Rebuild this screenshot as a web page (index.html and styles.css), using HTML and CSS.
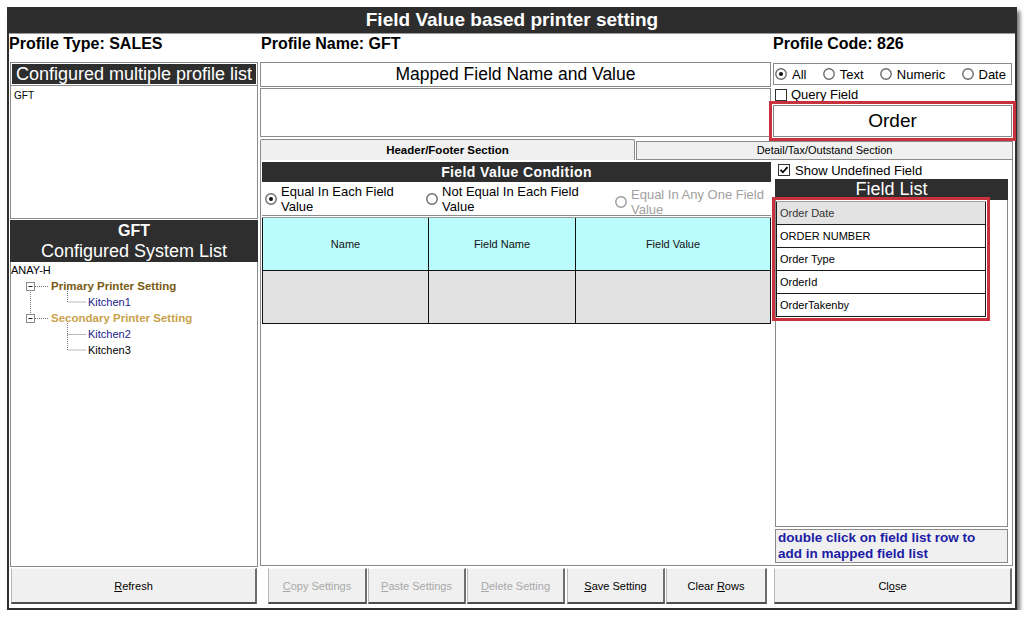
FILE: index.html
```html
<!DOCTYPE html>
<html>
<head>
<meta charset="utf-8">
<title>Field Value based printer setting</title>
<link rel="stylesheet" href="styles.css">
</head>
<body>
<div class="window">
  <div class="titlebar">Field Value based printer setting</div>
  <div class="body">
    <div class="profile-row">
      <div class="pc1">Profile Type: SALES</div>
      <div class="pc2">Profile Name: GFT</div>
      <div class="pc3">Profile Code: 826</div>
    </div>
    <div class="main">
      <div class="leftcol">
        <div class="lhead"><div class="lhead-in">Configured multiple profile list</div></div>
        <div class="plist">GFT</div>
        <div class="syshead">
          <div class="g1">GFT</div>
          <div class="g2">Configured System List</div>
        </div>
        <div class="tree">
          <svg class="tree-lines" width="90" height="100" viewBox="0 0 90 100">
            <g fill="none" stroke="#7a7a7a" stroke-dasharray="1 1">
              <path d="M19.5 28 V52"/>
              <path d="M24 24.5 H38"/>
              <path d="M24 56.5 H38"/>
              <path d="M56.5 29 V40 H75"/>
              <path d="M56.5 61 V88 H75"/>
              <path d="M56.5 72.5 H75"/>
            </g>
            <rect x="15.5" y="20.5" width="8" height="8" fill="#fff" stroke="#8a8a8a"/>
            <path d="M17.5 24.5 H21.5" stroke="#222"/>
            <rect x="15.5" y="52.5" width="8" height="8" fill="#fff" stroke="#8a8a8a"/>
            <path d="M17.5 56.5 H21.5" stroke="#222"/>
          </svg>
          <div class="trow t0">ANAY-H</div>
          <div class="trow t1 primary">Primary Printer Setting</div>
          <div class="trow t2 kit">Kitchen1</div>
          <div class="trow t1 secondary">Secondary Printer Setting</div>
          <div class="trow t2 kit">Kitchen2</div>
          <div class="trow t2">Kitchen3</div>
        </div>
      </div>
      <div class="rarea">
        <div class="top">
          <div class="midtop">
            <div class="maphead">Mapped Field Name and Value</div>
            <div class="mapbox"></div>
          </div>
          <div class="righttop">
            <div class="typebox">
              <span class="opt-s"><svg width="12" height="12" viewBox="0 0 12 12"><circle cx="6" cy="6" r="5.2" fill="#fff" stroke="#6b6b6b" stroke-width="1.4"/><circle cx="6" cy="6" r="2" fill="#111"/></svg>All</span>
              <span class="opt-s"><svg width="12" height="12" viewBox="0 0 12 12"><circle cx="6" cy="6" r="5.2" fill="#fff" stroke="#6b6b6b" stroke-width="1.4"/></svg>Text</span>
              <span class="opt-s"><svg width="12" height="12" viewBox="0 0 12 12"><circle cx="6" cy="6" r="5.2" fill="#fff" stroke="#6b6b6b" stroke-width="1.4"/></svg>Numeric</span>
              <span class="opt-s"><svg width="12" height="12" viewBox="0 0 12 12"><circle cx="6" cy="6" r="5.2" fill="#fff" stroke="#6b6b6b" stroke-width="1.4"/></svg>Date</span>
            </div>
            <div class="query"><svg class="cb" width="12" height="12" viewBox="0 0 12 12"><rect x="0.5" y="0.5" width="11" height="11" fill="#fff" stroke="#333"/></svg><span>Query Field</span></div>
            <div class="order">Order</div>
          </div>
        </div>
        <div class="tabs">
          <div class="tab1">Header/Footer Section</div>
          <div class="tab2">Detail/Tax/Outstand Section</div>
        </div>
        <div class="page">
          <div class="pleft">
            <div class="fvc">Field Value Condition</div>
            <div class="radios">
              <div class="opt o1"><svg width="12" height="12" viewBox="0 0 12 12"><circle cx="6" cy="6" r="5.2" fill="#fff" stroke="#6b6b6b" stroke-width="1.4"/><circle cx="6" cy="6" r="2" fill="#111"/></svg><span class="otext">Equal In Each Field Value</span></div>
              <div class="opt o2"><svg width="12" height="12" viewBox="0 0 12 12"><circle cx="6" cy="6" r="5.2" fill="#fff" stroke="#6b6b6b" stroke-width="1.4"/></svg><span class="otext">Not Equal In Each Field Value</span></div>
              <div class="opt o3"><svg width="12" height="12" viewBox="0 0 12 12"><circle cx="6" cy="6" r="5.2" fill="#fff" stroke="#9a9a9a" stroke-width="1.4"/></svg><span class="otext">Equal In Any One Field Value</span></div>
            </div>
            <div class="tbl">
              <div class="th first">Name</div>
              <div class="th">Field Name</div>
              <div class="th">Field Value</div>
              <div class="td first"></div>
              <div class="td"></div>
              <div class="td"></div>
            </div>
          </div>
          <div class="pright">
            <div class="showund"><svg class="cb" width="12" height="12" viewBox="0 0 12 12"><rect x="0.5" y="0.5" width="11" height="11" fill="#fff" stroke="#333"/><path d="M2.5 5.8 L4.9 8.3 L9.5 3.2" fill="none" stroke="#000" stroke-width="1.8"/></svg><span>Show Undefined Field</span></div>
            <div class="flhead">Field List</div>
            <div class="flist">
              <div class="rows">
                <div class="row sel">Order Date</div>
                <div class="row">ORDER NUMBER</div>
                <div class="row">Order Type</div>
                <div class="row">OrderId</div>
                <div class="row">OrderTakenby</div>
              </div>
            </div>
            <div class="hint">double click on field list row to add in mapped field list</div>
          </div>
        </div>
      </div>
    </div>
    <div class="btns">
      <div class="btn b-refresh"><span><u>R</u>efresh</span></div>
      <div class="btn b-copy dis"><span><u>C</u>opy Settings</span></div>
      <div class="btn b-paste dis"><span><u>P</u>aste Settings</span></div>
      <div class="btn b-del dis"><span><u>D</u>elete Setting</span></div>
      <div class="btn b-save"><span><u>S</u>ave Setting</span></div>
      <div class="btn b-clear"><span>Clear <u>R</u>ows</span></div>
      <div class="btn b-close"><span>Cl<u>o</u>se</span></div>
    </div>
  </div>
</div>
</body>
</html>
```

FILE: styles.css
```css
* { box-sizing: border-box; }
html, body { margin: 0; padding: 0; background: #fff; }
body { font-family: "Liberation Sans", Arial, sans-serif; color: #000; }

.window {
  margin: 7px 0 0 7px;
  width: 1010px;
  height: 603px;
  border: 2px solid #2f2f2f;
  border-top: 0;
  background: #fff;
  box-shadow: 3px 4px 4px rgba(0, 0, 0, 0.55);
  display: flex;
  flex-direction: column;
}
.titlebar {
  height: 27px;
  background: #2d2d2d;
  color: #fff;
  font-weight: bold;
  font-size: 19px;
  line-height: 26px;
  text-align: center;
  border-bottom: 1px solid #9a9a9a;
}
.body { display: flex; flex-direction: column; }

.profile-row {
  height: 28px;
  display: flex;
  font-weight: bold;
  font-size: 16px;
  line-height: 20px;
}
.pc1 { width: 252px; }
.pc2 { width: 512px; }

.main { height: 505px; display: flex; }
.leftcol {
  width: 250px;
  padding: 0 1px;
  display: flex;
  flex-direction: column;
}
.lhead { height: 24px; border: 1px solid #8a8a8a; padding: 1px; }
.lhead-in {
  height: 100%;
  background: #2e2e2e;
  color: #fff;
  font-size: 18px;
  line-height: 20px;
  text-align: center;
  white-space: nowrap;
  overflow: hidden;
}
.plist {
  height: 133px;
  border: 1px solid #8a8a8a;
  border-top: 0;
  font-size: 10px;
  line-height: 12px;
  padding: 4px 3px;
}
.syshead {
  margin-top: 1px;
  height: 42px;
  background: #2e2e2e;
  color: #fff;
  text-align: center;
  padding-top: 1px;
}
.g1 { font-weight: bold; font-size: 16px; line-height: 20px; }
.g2 { font-size: 18px; line-height: 20px; }
.tree {
  flex: 1;
  border: 1px solid #8a8a8a;
  border-top: 0;
  position: relative;
  font-size: 11px;
}
.tree-lines { position: absolute; left: 0; top: 0; }
.trow { height: 16px; line-height: 16px; white-space: nowrap; }
.t0 { padding-left: 0; }
.t1 { padding-left: 40px; font-weight: bold; font-size: 11.5px; }
.t2 { padding-left: 77px; }
.primary { color: #7a5a12; }
.secondary { color: #c9a24c; }
.kit { color: #1c1c8e; }

.rarea {
  width: 756px;
  padding-left: 1px;
  display: flex;
  flex-direction: column;
}
.top { height: 77px; display: flex; }
.midtop { width: 511px; }
.maphead {
  height: 25px;
  border: 1px solid #8a8a8a;
  text-align: center;
  font-size: 17.5px;
  line-height: 23px;
}
.mapbox { margin-top: 1px; height: 49px; border: 1px solid #8a8a8a; }
.righttop { width: 239px; margin-left: 2px; }
.typebox {
  margin-top: 1px;
  height: 22px;
  border: 1px solid #8a8a8a;
  display: flex;
  align-items: center;
  justify-content: space-between;
  padding: 0 5px 0 1px;
  font-size: 13px;
}
.opt-s { display: flex; align-items: center; gap: 5px; }
.query {
  margin-top: 3px;
  height: 13px;
  overflow: hidden;
  display: flex;
  align-items: flex-start;
  gap: 4px;
  font-size: 13px;
  line-height: 14px;
  padding-left: 2px;
}
.query .cb { margin-top: 1px; flex: none; }
.order {
  margin-top: 4px;
  height: 32px;
  border: 1px solid #8a8a8a;
  outline: 3px solid #c8323c;
  outline-offset: 1px;
  font-size: 19px;
  line-height: 30px;
  text-align: center;
  position: relative;
  z-index: 1;
}

.tabs { height: 21px; display: flex; align-items: flex-end; }
.tab1 {
  width: 375px;
  height: 21px;
  background: #f0f0f0;
  border: 1px solid #8a8a8a;
  border-bottom: 0;
  border-radius: 2px 2px 0 0;
  font-weight: bold;
  font-size: 11.5px;
  line-height: 20px;
  text-align: center;
}
.tab2 {
  width: 377px;
  height: 19px;
  margin-left: 1px;
  background: #f0f0f0;
  border: 1px solid #8a8a8a;
  font-size: 11px;
  line-height: 17px;
  text-align: center;
}
.page {
  width: 753px;
  height: 406px;
  border: 1px solid #8a8a8a;
  border-top: 0;
  display: flex;
}
.pleft {
  margin-left: 1px;
  width: 509px;
  display: flex;
  flex-direction: column;
}
.fvc {
  margin-top: 2px;
  height: 20px;
  background: #2e2e2e;
  color: #fff;
  font-weight: bold;
  font-size: 14px;
  letter-spacing: 0.4px;
  line-height: 20px;
  text-align: center;
}
.radios {
  margin-top: 1px;
  height: 33px;
  border-bottom: 1px solid #8a8a8a;
  display: flex;
  overflow: hidden;
  font-size: 13px;
  line-height: 15px;
  padding-left: 3px;
}
.opt { display: flex; align-items: center; gap: 4px; }
.opt svg { flex: none; }
.o1 { width: 162px; }
.o1 .otext { width: 140px; }
.o2 { width: 190px; }
.o2 .otext { width: 150px; }
.o3 { margin-top: 5px; color: #a0a0a0; }
.o3 .otext { width: 140px; }

.tbl {
  margin-top: 1px;
  display: grid;
  grid-template-columns: 167px 147px 195px;
  border-top: 1px solid #9a9a9a;
}
.th, .td {
  height: 53px;
  border-right: 1px solid #111;
  border-bottom: 1px solid #111;
}
.th {
  background: #bafcfc;
  display: flex;
  align-items: center;
  justify-content: center;
  font-size: 11px;
  color: #111;
}
.td { background: #e1e1e1; }
.first { border-left: 1px solid #111; }

.pright {
  margin-left: 4px;
  width: 233px;
  display: flex;
  flex-direction: column;
}
.showund {
  margin-top: 2px;
  height: 16px;
  display: flex;
  align-items: center;
  gap: 5px;
  padding-left: 3px;
  font-size: 13px;
}
.flhead {
  margin-top: 1px;
  height: 21px;
  background: #2e2e2e;
  color: #fff;
  font-size: 18px;
  line-height: 21px;
  text-align: center;
}
.flist {
  height: 327px;
  border: 1px solid #8a8a8a;
  border-top: 0;
  padding-top: 1px;
}
.rows {
  width: 210px;
  outline: 3px solid #c8323c;
  outline-offset: 1px;
  border-top: 1px solid #a0a0a0;
}
.row {
  height: 23px;
  border: 1px solid #1a1a1a;
  border-top: 0;
  font-size: 11px;
  line-height: 22px;
  padding-left: 3px;
}
.row.sel { background: #e3e3e3; color: #333; }
.hint {
  margin-top: 2px;
  height: 34px;
  background: #f0f0f0;
  border: 1px solid #8a8a8a;
  color: #1c1ca6;
  font-weight: bold;
  font-size: 13.5px;
  line-height: 16px;
  padding: 0 18px 0 2px;
}

.btns {
  height: 41px;
  display: flex;
  padding: 1px 0 0 2px;
}
.btn {
  height: 36px;
  background: #f0f0f0;
  border-top: 1px solid #fafafa;
  border-left: 1px solid #b8b8b8;
  border-right: 2px solid #6e6e6e;
  border-bottom: 2px solid #4e4e4e;
  font-size: 11px;
  display: flex;
  align-items: center;
  justify-content: center;
}
.dis { color: #a8a8a8; }
.b-refresh { width: 246px; }
.b-copy { width: 99px; margin-left: 11px; }
.b-paste { width: 98px; margin-left: 1px; }
.b-del { width: 98px; margin-left: 1px; }
.b-save { width: 98px; margin-left: 2px; }
.b-clear { width: 101px; margin-left: 1px; }
.b-close { width: 238px; margin-left: 7px; }
```
